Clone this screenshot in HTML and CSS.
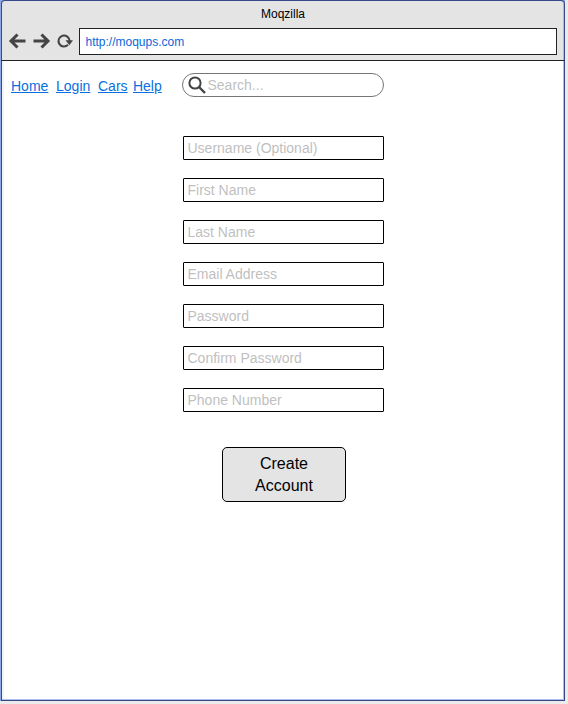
FILE: index.html
```html
<!DOCTYPE html>
<html lang="en">
<head>
<meta charset="utf-8">
<title>Moqzilla</title>
<link rel="stylesheet" href="styles.css">
</head>
<body>
<div class="window">
  <header class="chrome">
    <div class="title">Moqzilla</div>
    <div class="toolbar">
      <svg class="nav-icons" width="66" height="17" viewBox="0 0 66 17">
        <g fill="none" stroke="#444" stroke-width="3">
          <path d="M3 8H17.500M9.500 1.500L3 8l6.500 6.500"/>
          <path d="M25.500 8H40M33.500 1.500L40 8l-6.500 6.500"/>
          <path stroke-width="2" d="M60 11.800A5.500 5.500 0 1 1 61.500 8"/>
        </g>
        <path fill="#444" d="M57.500 7.300h7.500l-3.600 5z"/>
      </svg>
      <div class="address">http://moqups.com</div>
    </div>
  </header>
  <div class="page">
    <div class="top">
      <nav class="links"><a href="#">Home</a><a href="#">Login</a><a href="#">Cars</a><a href="#">Help</a></nav>
      <div class="search">
        <svg width="18" height="18" viewBox="0 0 18 18" fill="none" stroke="#444">
          <circle cx="7" cy="7" r="5.600" stroke-width="2"/>
          <path d="M11 11l6 6" stroke-width="2.400"/>
        </svg>
        <span>Search...</span>
      </div>
    </div>
    <form class="form">
      <div class="field">Username (Optional)</div>
      <div class="field">First Name</div>
      <div class="field">Last Name</div>
      <div class="field">Email Address</div>
      <div class="field">Password</div>
      <div class="field">Confirm Password</div>
      <div class="field">Phone Number</div>
      <button class="submit" type="button">Create<br>Account</button>
    </form>
  </div>
</div>
</body>
</html>
```
FILE: styles.css
```css
* { box-sizing: border-box; }
body {
  margin: 0;
  height: 704px;
  overflow: hidden;
  background: #ebebeb;
  font-family: "Liberation Sans", Arial, sans-serif;
}
.window {
  width: 565px;
  height: 701px;
  border-left: 1px solid #8ea9e8;
  background: #8ea9e8;
}
.chrome {
  height: 61px;
  border: 1px solid #34488a;
  border-bottom: 1px solid #222;
  border-radius: 4px 4px 0 0;
  background: #e4e4e4;
  box-shadow: inset -1px 0 #a9b9e8;
}
.title {
  height: 27px;
  line-height: 26px;
  font-size: 12px;
  text-align: center;
  color: #000;
}
.toolbar {
  display: flex;
  align-items: center;
  padding: 0 6px 0 6px;
}
.nav-icons { flex: none; }
.address {
  width: 478px;
  height: 27px;
  margin-left: 5px;
  padding-left: 5.5px;
  border: 1px solid #222;
  background: #fff;
  color: #0a67d8;
  font-size: 12px;
  line-height: 26px;
}
.page {
  height: 640px;
  padding: 12px 0 0 9px;
  border: 1px solid #34488a;
  border-top: 0;
  background: #fff;
  box-shadow: inset -1px -1px #b0bde8, inset 2px 0 #f4f4f4;
}
.top { display: flex; }
.links {
  display: flex;
  width: 171px;
  padding-top: 5px;
  font-size: 14px;
  line-height: 16px;
}
.links a { color: #0a6fe0; margin-right: 7.7px; }
.links a:nth-child(3) { margin-right: 5.4px; }
.links a:last-child { margin-right: 0; }
.search {
  display: flex;
  align-items: center;
  width: 202px;
  height: 24px;
  padding-left: 5px;
  border: 1px solid #777;
  border-radius: 12px;
  color: #bfbfbf;
  font-size: 14px;
}
.search span { margin-left: 1.5px; }
.form {
  display: flex;
  flex-direction: column;
  width: 201px;
  margin: 39px 0 0 172px;
  gap: 18px;
}
.field {
  height: 24px;
  padding-left: 3.5px;
  border: 1px solid #000;
  border-radius: 1px;
  color: #bfbfbf;
  font-size: 14px;
  line-height: 23px;
}
.submit {
  width: 124px;
  height: 55px;
  margin: 17px 0 0 39px;
  padding: 0;
  border: 1px solid #000;
  border-radius: 5px;
  background: #e4e4e4;
  color: #000;
  font: 16px/22px "Liberation Sans", Arial, sans-serif;
}
```
